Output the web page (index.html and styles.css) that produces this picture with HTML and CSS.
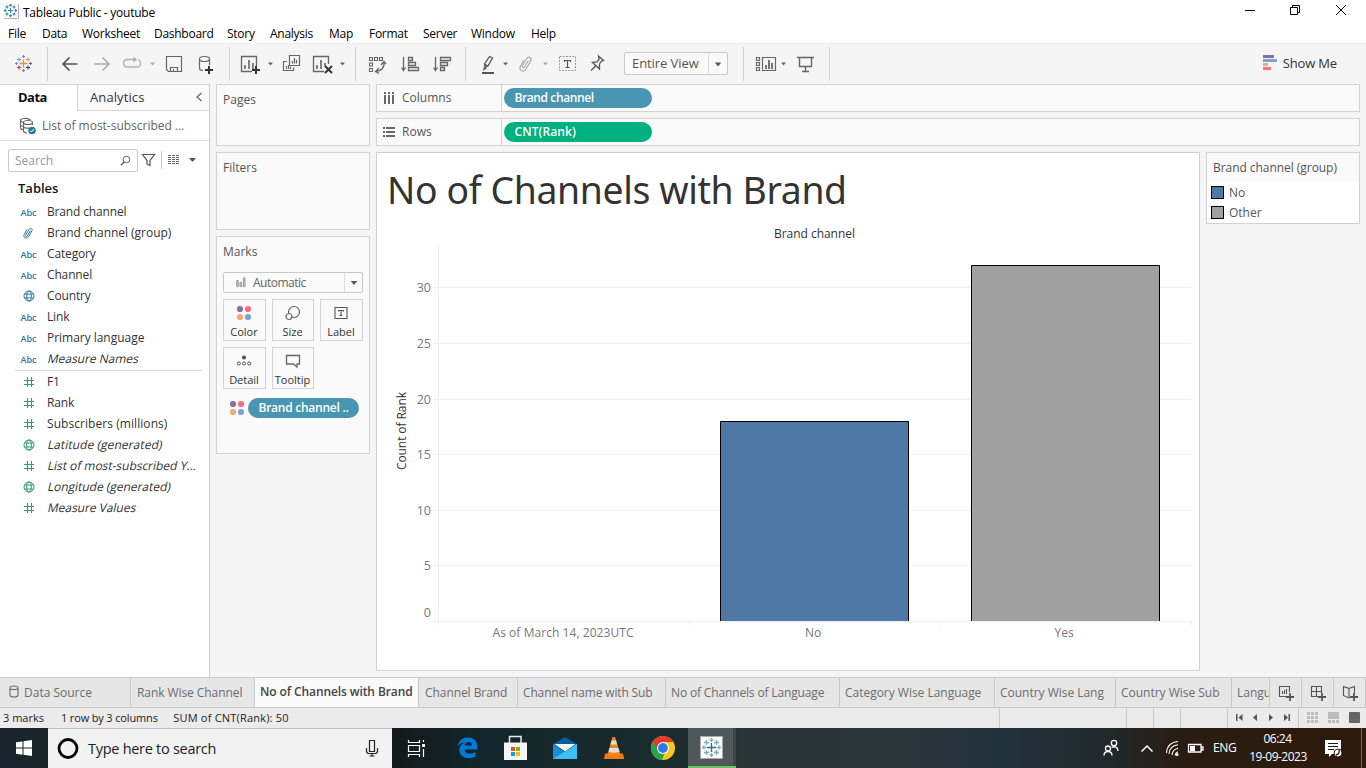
FILE: index.html
```html
<!DOCTYPE html>
<html lang="en">
<head>
<meta charset="utf-8">
<title>Tableau Public - youtube</title>
<link rel="stylesheet" href="styles.css">
</head>
<body>
<svg class="defs" width="0" height="0">
  <defs>
    <path id="plus-s" d="M-2.5 0H2.5M0-2.5V2.5"/>
    <path id="plus-l" d="M-4 0H4M0-4V4"/>
    <path id="caret" d="M-2.5-1.5H2.5L0 1.5Z"/>
    <symbol id="abc" viewBox="0 0 18 12"><text x="0.5" y="10" textLength="16" lengthAdjust="spacingAndGlyphs">Abc</text></symbol>
    <symbol id="globe" viewBox="0 0 12 12"><g fill="none" stroke="currentColor"><circle cx="6" cy="6" r="5"/><ellipse cx="6" cy="6" rx="2.3" ry="5"/><path d="M1.5 4H10.5M1.5 8H10.5"/></g></symbol>
    <symbol id="hash" viewBox="0 0 12 12"><path d="M4.5 1V11M8.5 1V11M1 4.5H11M1 8.5H11" fill="none" stroke="currentColor" stroke-width="1.1"/></symbol>
    <symbol id="clip" viewBox="0 0 12 14"><path d="M8.5 4.5L5.3 10C4.6 11.2 3 10.4 3.6 9.2L7 3.4C8.200 1.300 11 2.600 9.900 4.900L6.600 10.700C4.900 13.500 .5 11.800 2.200 8.300L5 3.500" fill="none" stroke="currentColor" stroke-width="1"/></symbol>
    <symbol id="dots" viewBox="0 0 16 16"><circle cx="4" cy="4" r="3.1" fill="#8a6f9e"/><circle cx="12" cy="4" r="3.1" fill="#fa6e7d"/><circle cx="4" cy="12" r="3.1" fill="#f4a77c"/><circle cx="12" cy="12" r="3.1" fill="#7ea3cf"/></symbol>
  </defs>
</svg>

<header class="titlebar">
  <svg class="app-icon" viewBox="0 0 17 17"><path d="M0 0H15V15H0Z" fill="#f6f6f6"/><path d="M15.500 1V15.500H1" fill="none" stroke="#b5b5b5"/><g stroke="#3c87b4" stroke-width="1.200"><use href="#plus-s" x="7.500" y="7.500"/><path d="M7.500 1V3.500M7.500 11.500V14M1 7.500H3.500M11.500 7.500H14M6 2.300H9M6 12.700H9M2.300 6V9M12.700 6V9M2.500 4H5.500M4 2.500V5.500M9.500 4H12.500M11 2.500V5.500M2.500 11H5.500M4 9.500V12.500M9.500 11H12.500M11 9.500V12.500"/></g></svg>
  <span class="app-title">Tableau Public - youtube</span>
  <svg class="window-buttons" viewBox="1240 0 126 24"><path d="M1245 10.500H1255M1290.500 7.500H1297.500V14.500H1290.500ZM1292.500 7V5.500H1299.500V12.500H1297.500M1336 5L1346 15M1346 5L1336 15" fill="none" stroke="#000"/></svg>
</header>
<nav class="menubar">
  <span>File</span><span>Data</span><span>Worksheet</span><span>Dashboard</span><span>Story</span><span>Analysis</span><span>Map</span><span>Format</span><span>Server</span><span>Window</span><span>Help</span>
</nav>

<div class="toolbar">
  <svg class="tool" width="48" viewBox="0 44 48 40"><g stroke-width="1.100"><use href="#plus-l" x="23.500" y="63.500" stroke="#eb8a3c" stroke-width="1.300"/><path d="M23.500 55V58M22 56.500H25M23.500 69V72M22 70.500H25" stroke="#7d86a8"/><path d="M15 63.500H18M16.500 62V65" stroke="#5b9db5"/><path d="M29 63.500H32M30.500 62V65" stroke="#5a6591"/><path d="M17 59.500H21M19 57.500V61.500" stroke="#6da2b8"/><path d="M26 59.500H30M28 57.500V61.500" stroke="#e7915b"/><path d="M17 67.500H21M19 65.500V69.500" stroke="#c8304a"/><path d="M26 67.500H30M28 65.500V69.500" stroke="#1f457e"/></g></svg>
  <svg class="tool sep" width="182" viewBox="48 44 182 40">
    <path d="M77.500 64H63M69.500 57.500L63 64L69.500 70.500" stroke="#555" stroke-width="1.700" fill="none"/>
    <path d="M94.500 64H109M102.500 57.500L109 64L102.500 70.500" stroke="#aaa" stroke-width="1.500" fill="none"/>
    <path d="M134 59.500H128Q123.500 59.500 123.500 63.200T128 67H137Q140.500 67 140.500 63.500Q140.500 60.500 138.500 59.500" stroke="#b0b0b0" stroke-width="1.300" fill="none"/><path d="M133.500 56.500V62.500L137 59.500Z" fill="#b0b0b0"/>
    <use href="#caret" x="152.500" y="64" fill="#aaa"/>
    <path d="M166.500 56.500H181.500V71.500H168.500L166.500 69.500ZM170.500 71V67.500H177.500V71M173.500 69V71" stroke="#666" stroke-width="1.200" fill="none"/>
    <path d="M199.500 59Q199.500 56.500 204.500 56.500T209.500 59T204.500 61.500T199.500 59V68.500Q200 70.500 203 70.500M209.500 59V65" stroke="#666" stroke-width="1.200" fill="none"/><use href="#plus-l" x="209" y="70" stroke="#333" stroke-width="2"/>
  </svg>
  <svg class="tool sep" width="126" viewBox="230 44 126 40">
    <g stroke="#666" fill="none"><path d="M252 71.500H241.500V56.500H256.500V66" stroke-width="1.300"/><path d="M245 69V65M249 69V60M253 69V63" stroke-width="1.600"/></g><use href="#plus-l" x="256" y="70" stroke="#333" stroke-width="2"/><use href="#caret" x="270.500" y="64" fill="#666"/>
    <g stroke="#666" fill="none"><path d="M289.500 55.500H299.500V65.500H289.500ZM287 61.500H283.500V70.500H293.500V67.500" stroke-width="1.200"/><path d="M292.500 63.500V61M294.500 63.500V58M296.500 63.500V60M286.500 69V66M288.500 69V65M290.500 69V66.500" stroke-width="1.200"/></g>
    <g stroke="#666" fill="none"><path d="M324 71.500H313.500V56.500H328.500V64" stroke-width="1.300"/><path d="M317 69V65M321 69V60M325 66V63" stroke-width="1.600"/></g><path d="M325 66L332 73M332 66L325 73" stroke="#333" stroke-width="2"/><use href="#caret" x="342.500" y="64" fill="#666"/>
  </svg>
  <svg class="tool sep" width="110" viewBox="356 44 110 40">
    <g stroke="#666" fill="none" stroke-width="1.100"><path d="M369.500 57.500H372.500V60.500H369.500ZM374.500 57.500H377.500V60.500H374.500ZM379.500 57.500H382.500V60.500H379.500ZM369.500 63H372.500V66H369.500ZM369.500 68.500H372.500V71.500H369.500Z"/><path d="M384 62Q385 70 376 71.500M381 65L384 61.500L386 64M379 68L375.500 71.500L379 73.500" stroke-width="1.300"/>
    <path d="M403.500 57V70M401.500 67.500L403.500 70.500L405.500 67.500M408.500 57.500H412.500V60.500H408.500ZM408.500 62.500H415.500V65.500H408.500ZM408.500 67.500H418.500V70.500H408.500Z" stroke-width="1.300"/>
    <path d="M435.500 57V70M433.500 67.500L435.500 70.500L437.500 67.500M440.500 57.500H450.500V60.500H440.500ZM440.500 62.500H447.500V65.500H440.500ZM440.500 67.500H444.500V70.500H440.500Z" stroke-width="1.300"/></g>
  </svg>
  <svg class="tool" width="158" viewBox="466 44 158 40">
    <path d="M485 67L484.500 64L489.500 56.500L492.500 58L488 66ZM484.500 64L488 66M484.500 67.500L484 69.500L486.500 67.500" stroke="#555" fill="none" stroke-width="1.300"/><path d="M482 73H494" stroke="#555" stroke-width="2"/><use href="#caret" x="505.500" y="64" fill="#666"/>
    <path d="M528.500 60.500L524.500 67C523.500 68.500 521.500 67.500 522.500 65.500L526.500 59C528.500 55.500 532.500 57.500 530.500 61.500L526 69C523.500 73 518 70.500 520.500 66L524 60" stroke="#aaa" fill="none" stroke-width="1.200"/><use href="#caret" x="545.500" y="64" fill="#aaa"/>
    <path d="M559.500 56.500H575.500V70.500H559.500Z" stroke="#999" stroke-dasharray="2 1.200" fill="none"/><path d="M564.500 62V60.500H570.500V62M567.500 60.500V67.500M565.500 67.500H569.500" stroke="#555" stroke-width="1.200" fill="none"/>
    <path d="M598.500 56L603.500 60.500L601.500 61L599.500 64L599.500 69L592.500 62.500L597 62L599 59.500ZM595.500 66L591 70.500" stroke="#555" stroke-width="1.300" fill="none"/>
  </svg>
  <div class="fit-select"><span>Entire View</span><svg width="18" height="20"><use href="#caret" transform="translate(9 10.500) scale(1.300)" fill="#555"/></svg></div>
  <svg class="tool sep" width="102" viewBox="728 44 102 40"><path d="M743.500 47V81" stroke="#d2d2d2"/><g stroke="#666" fill="none" stroke-width="1.200"><path d="M756.500 57.500H759.500V60.500H756.500ZM756.500 62.500H759.500V65.500H756.500ZM756.500 67.500H759.500V70.500H756.500ZM762.500 57.500H775.500V70.500H762.500Z"/><path d="M766 69V65M769 69V60M772 69V63" stroke-width="1.800"/><path d="M797 57.500H814M799.500 57.500V66.500H811.500V57.500M805.500 66.500V71M802 71.500H809" stroke-width="1.400"/></g><use href="#caret" x="783.500" y="64" fill="#666"/></svg>
  <div class="show-me"><svg width="14" height="16"><path fill="#86719b" d="M0 0H11V3H0Z"/><path fill="#7ea3cf" d="M0 4H14V7H0Z"/><path fill="#f4a77c" d="M0 8H5V11H0Z"/><path fill="#fa6e7d" d="M0 12H8V15H0Z"/></svg><span>Show Me</span></div>
</div>

<main class="workspace">
  <aside class="data-pane">
    <div class="pane-tabs"><b>Data</b><div><span>Analytics</span><svg width="8" height="12"><path d="M6.500 1L2 5L6.500 9" fill="none" stroke="#666" stroke-width="1.300"/></svg></div></div>
    <div class="source-row"><svg width="18" height="18" viewBox="19 116 18 18"><g fill="none" stroke="#666" stroke-width="1.100"><path d="M30.500 119Q28 116.800 24 117.500T20.500 119.500V127Q21 128.500 23 128.500M20.500 119.500Q21.500 121.500 24 121.500M20.500 124Q21.500 125.500 23.500 125.500"/><ellipse cx="28" cy="121.500" rx="4.500" ry="2"/><path d="M23.500 121.500V130Q24 132 27 132M32.500 121.500V124M23.500 126Q25 127.500 29 127"/></g><circle cx="32" cy="129.500" r="3.800" fill="#2b7a9e"/><path d="M30 129.500L31.500 131L34 128" fill="none" stroke="#fff"/></svg><span>List of most-subscribed ...</span></div>
    <div class="search-row">
      <div class="search-box"><span>Search</span><svg width="11" height="12"><circle cx="6.500" cy="4.500" r="3.300" fill="none" stroke="#666"/><path d="M4.200 7L1 10.200" stroke="#555" stroke-width="1.300"/></svg></div>
      <svg class="search-tools" width="66" height="24" viewBox="138 148 66 24"><path d="M142.500 154.500H154.500L150 160.500V165.500L147 164V160.500Z" fill="none" stroke="#555" stroke-width="1.200"/><path d="M161.500 151V169" stroke="#d0d0d0"/><path d="M168 155.500H180M168 157.500H180M168 159.500H180M168 161.500H180M168 163.500H180" stroke="#666" stroke-dasharray="3 1 3 1 3 1"/><path d="M189 158H196L192.500 162Z" fill="#555"/></svg>
    </div>
    <h2>Tables</h2>
    <ul class="fields dims">
      <li><svg class="abc"><use href="#abc"/></svg>Brand channel</li>
      <li class="wide"><svg class="clip"><use href="#clip"/></svg>Brand channel (group)</li>
      <li><svg class="abc"><use href="#abc"/></svg>Category</li>
      <li><svg class="abc"><use href="#abc"/></svg>Channel</li>
      <li><svg class="glyph"><use href="#globe"/></svg>Country</li>
      <li><svg class="abc"><use href="#abc"/></svg>Link</li>
      <li class="wide"><svg class="abc"><use href="#abc"/></svg>Primary language</li>
      <li class="wide"><svg class="abc"><use href="#abc"/></svg><i>Measure Names</i></li>
    </ul>
    <ul class="fields measures">
      <li><svg class="glyph"><use href="#hash"/></svg>F1</li>
      <li><svg class="glyph"><use href="#hash"/></svg>Rank</li>
      <li class="wider"><svg class="glyph"><use href="#hash"/></svg>Subscribers (millions)</li>
      <li class="wider"><svg class="glyph"><use href="#globe"/></svg><i>Latitude (generated)</i></li>
      <li class="wide"><svg class="glyph"><use href="#hash"/></svg><i>List of most-subscribed Y...</i></li>
      <li class="wide"><svg class="glyph"><use href="#globe"/></svg><i>Longitude (generated)</i></li>
      <li class="wide"><svg class="glyph"><use href="#hash"/></svg><i>Measure Values</i></li>
    </ul>
  </aside>

  <section class="cards">
    <div class="card pages"><h3>Pages</h3></div>
    <div class="card filters"><h3>Filters</h3></div>
    <div class="card marks">
      <h3>Marks</h3>
      <div class="mark-type"><svg width="10" height="11"><path d="M.7 3.500H2.300V9.500H.7ZM4 5.500H5.600V9.500H4ZM7.400 1H9V9.500H7.400Z" fill="#ccc" stroke="#999"/></svg><span>Automatic</span><svg class="drop" width="18" height="19"><use href="#caret" transform="translate(9 10) scale(1.300)" fill="#555"/></svg></div>
      <div class="mark-grid">
        <div><svg width="16" height="16"><use href="#dots"/></svg>Color</div>
        <div><svg width="16" height="16"><g fill="#fafafa" stroke="#666" stroke-width="1.200"><circle cx="9" cy="7" r="5.500"/><circle cx="4" cy="11.500" r="3"/></g></svg>Size</div>
        <div><svg width="16" height="16"><path d="M2 2.500H14V13.500H2ZM5.500 6.500V5.500H10.500V6.500M8 5.500V10.500M6.500 10.500H9.500" fill="none" stroke="#555" stroke-width="1.100"/></svg>Label</div>
        <div><svg width="16" height="16"><circle cx="8" cy="4.500" r="2.100" fill="#555"/><g fill="none" stroke="#555"><circle cx="2.800" cy="10.500" r="1.600"/><circle cx="8" cy="10.500" r="1.600"/><circle cx="13.200" cy="10.500" r="1.600"/></g></svg>Detail</div>
        <div><svg width="16" height="16"><path d="M1.500 2.500H14.500V11H12V14L8.500 11H1.500Z" fill="none" stroke="#666" stroke-width="1.300"/></svg>Tooltip</div>
      </div>
      <div class="mark-pill"><svg width="16" height="16"><use href="#dots"/></svg><span class="pill blue">Brand channel ..</span></div>
    </div>
  </section>

  <section class="stage">
    <div class="shelf"><div class="shelf-name"><svg width="13" height="13"><path d="M1 0H3V2H1ZM5 0H7V2H5ZM9 0H11V2H9ZM1 3H3V12H1ZM5 3H7V12H5ZM9 3H11V12H9Z" fill="#666"/></svg><span>Columns</span></div><span class="pill blue">Brand channel</span></div>
    <div class="shelf"><div class="shelf-name"><svg width="13" height="13"><path d="M0 1H2V3H0ZM0 5H2V7H0ZM0 9H2V11H0ZM3 1H12V3H3ZM3 5H12V7H3ZM3 9H12V11H3Z" fill="#666"/></svg><span>Rows</span></div><span class="pill green">CNT(Rank)</span></div>
    <div class="stage-row">
      <div class="view">
        <h1>No of Channels with Brand</h1>
        <svg class="chart" viewBox="377 224 822 446">
          <path class="grid" d="M438 287.500H1191M438 343.500H1191M438 399.500H1191M438 454.500H1191M438 510.500H1191M438 565.500H1191"/>
          <path class="axis" d="M438.500 245V625M434 621.500H1191.500V625M689.500 621V625M940.500 621V625M434 287.500H438M434 343.500H438M434 399.500H438M434 454.500H438M434 510.500H438M434 565.500H438"/>
          <path d="M720.500 621V421.500H908.500V621" fill="#4e79a7" stroke="#000"/>
          <path d="M971.500 621V265.500H1159.500V621" fill="#a0a0a0" stroke="#000"/>
          <text class="head" x="774" y="238" textLength="81">Brand channel</text>
          <g class="nums"><text x="431" y="292">30</text><text x="431" y="348">25</text><text x="431" y="404">20</text><text x="431" y="459">15</text><text x="431" y="515">10</text><text x="431" y="570">5</text><text x="431" y="617">0</text></g>
          <g class="cats"><text x="492.500" y="637" textLength="141">As of March 14, 2023UTC</text><text x="805" y="637">No</text><text x="1054.500" y="637">Yes</text></g>
          <text class="head" transform="translate(406 470) rotate(-90)" textLength="78">Count of Rank</text>
        </svg>
      </div>
      <div class="legend"><h3>Brand channel (group)</h3><p><i class="no"></i>No</p><p><i class="other"></i>Other</p></div>
    </div>
  </section>
</main>

<div class="sheet-tabs">
  <span><svg width="10" height="14"><path d="M1 3Q1 1 5 1T9 3V10Q9 12 5 12T1 10ZM1 3Q1 4.500 5 4.500T9 3" fill="none" stroke="#666" stroke-width="1.100"/></svg>Data Source</span><span>Rank Wise Channel</span><span class="active">No of Channels with Brand</span><span>Channel Brand</span><span class="tight">Channel name with Sub</span><span class="tight">No of Channels of Language</span><span class="shift">Category Wise Language</span><span class="shift">Country Wise Lang</span><span class="shift">Country Wise Sub</span><span class="shift">Langu</span>
  <span class="new"><svg viewBox="1270 678 31 29"><path d="M1288 696.500H1279.500V686.500H1289.500V692M1282.500 694V691M1284.500 694V690M1286.500 694V689" fill="none" stroke="#555" stroke-width="1.100"/><path d="M1286 697H1294M1290 693V701" stroke="#555" stroke-width="1.800"/></svg></span>
  <span class="new"><svg viewBox="1302 678 31 29"><path d="M1318 696.500H1311.500V686.500H1321.500V693M1311.500 691.500H1321.500M1316.500 686.500V696.500" fill="none" stroke="#555" stroke-width="1.100"/><path d="M1318 697H1326M1322 693V701" stroke="#555" stroke-width="1.800"/></svg></span>
  <span class="new"><svg viewBox="1334 678 31 29"><path d="M1343.500 686.500L1349 688.500V698L1343.500 695.500ZM1349 688.500L1354.500 686.500V693" fill="none" stroke="#555" stroke-width="1.100"/><path d="M1350 697H1358M1354 693V701" stroke="#555" stroke-width="1.800"/></svg></span>
</div>
<footer class="status">
  <span>3 marks</span><span>1 row by 3 columns</span><span>SUM of CNT(Rank): 50</span>
  <svg width="367" height="20" viewBox="999 708 367 20"><path d="M999.500 708V728M1126.500 708V728M1153.500 708V728M1180.500 708V728M1227.500 708V728M1298.500 708V728" stroke="#c9c9c9"/><path d="M1236 714H1237.500V721H1236ZM1242.500 714V721L1238.500 717.500ZM1257 714V721L1253 717.500ZM1269 714V721L1273 717.500ZM1284 714V721L1288 717.500ZM1288.500 714H1290V721H1288.500Z" fill="#555"/><path d="M1307 712H1310V715H1307ZM1311 712H1314V715H1311ZM1315 712H1318V715H1315ZM1307 716H1310V719H1307ZM1311 716H1314V719H1311ZM1315 716H1318V719H1315ZM1307 720H1310V723H1307ZM1311 720H1314V723H1311ZM1315 720H1318V723H1315ZM1328 712H1339V719H1328ZM1328 720H1331V723H1328ZM1332 720H1335V723H1332ZM1336 720H1339V723H1336Z" fill="#bdbdbd"/><rect x="1349" y="712" width="11" height="11" rx="1" fill="#666"/></svg>
</footer>

<div class="taskbar">
  <svg class="start" viewBox="0 728 48 40"><path d="M16 742.300L22.500 741.400V747.500H16ZM23.500 741.200L32 740V747.500H23.500ZM16 748.500H22.500V754.700L16 753.800ZM23.500 748.500H32V756L23.500 754.800Z" fill="#fff"/></svg>
  <div class="task-search"><svg width="24" height="24"><circle cx="12" cy="11.500" r="9" fill="none" stroke="#000" stroke-width="2.800"/></svg><span>Type here to search</span><svg class="mic" width="14" height="20"><path d="M4.500 1.500H9.500V12.500H4.500ZM1.500 9V12Q1.500 14.500 4 14.500H10Q12.500 14.500 12.500 12V9M7 14.500V17M4.500 17H9.500" fill="none" stroke="#222" stroke-width="1.200"/></svg></div>
  <svg class="apps" viewBox="392 728 344 40">
    <path d="M408.500 740V742.500H419.500V740M408.500 745.500H419.500V751.500H408.500ZM408.500 757V754.500H419.500V757M423.500 740V742M423.500 749V757" fill="none" stroke="#fff" stroke-width="1.200"/><path d="M422 744H425V747H422Z" fill="#fff"/>
    <path d="M457.500 746C459 740 463 737.500 468 737.500C474.500 737.500 477.500 742 477.300 747V749.500H464.500C464.800 753.500 469.500 755 475.500 752.300V756.500C468.500 760 460 758 459.300 750.500C459 747 461.500 744 465 742.500C461.500 742.800 459 744 457.500 746ZM464.800 745.500H472C472 743.500 471 742 468.700 742C466.500 742 465.200 743.500 464.800 745.500Z" fill="#0078d7"/>
    <path d="M509.500 745V736.500H521V745" fill="none" stroke="#e8e8e8" stroke-width="1.500"/><path d="M504 742.500H527V760H504Z" fill="#f5f5f5"/><path d="M511 747H515V751H511Z" fill="#e74e23"/><path d="M516 747H520V751H516Z" fill="#7fba00"/><path d="M511 752H515V756H511Z" fill="#00a4ef"/><path d="M516 752H520V756H516Z" fill="#ffb900"/>
    <path d="M553 744L565 737L577 744V748H553Z" fill="#0c5aa0"/><path d="M554.500 744H575.500L565 751.500Z" fill="#f5f5f5"/><path d="M553 744L565 752L577 744V759H553Z" fill="#1a8dd8"/><path d="M553 759L577 744V759Z" fill="#3ac1f2"/>
    <path d="M605 753.500H623L624.200 759H604Z" fill="#ef7a12"/><path d="M612.500 737H615L620.500 754.500Q614 758 607.500 754.500Z" fill="#f28318"/><path d="M611.600 740.500H616L617.200 744.500H610.300ZM609.500 748H618.400L619.500 751.500Q614 754 608.500 751.500Z" fill="#ddd"/>
    <circle cx="663" cy="748" r="12" fill="#f9c718"/><path d="M652.600 742A12 12 0 0 1 673.400 742H663L658 751Z" fill="#dc3b2d"/><path d="M652.600 742L658.500 750.500L665 752.500L662 760A12 12 0 0 1 652.600 742Z" fill="#2ca24c"/><circle cx="663" cy="748" r="6" fill="#fff"/><circle cx="663" cy="748" r="4.900" fill="#2d78e8"/>
    <path d="M688 728H733V766H688Z" fill="#4d585a"/><path d="M733 728H736V766H733Z" fill="#3c4648"/><path d="M688 766H736V768H688Z" fill="#68c35a"/><path d="M700.500 736.500H722.500V758.500H700.500Z" fill="#fafafa" stroke="#aaa"/>
    <path d="M711.500 743V752M707 747.500H716" stroke="#28728e" stroke-width="1.300"/><path d="M711.500 738V742M709.500 740H713.500M711.500 753V757M709.500 755H713.500M702 747.500H706M704 745.500V749.500M717 747.500H721M719 745.500V749.500M704 742.500H709M706.500 740V745M714 742.500H719M716.500 740V745M704 752.500H709M706.500 750V755M714 752.500H719M716.500 750V755" stroke="#80acc2" stroke-width="1.300"/>
  </svg>
  <svg class="tray" viewBox="1100 728 110 40"><g fill="none" stroke="#fff" stroke-width="1.300"><circle cx="1108" cy="748.500" r="2.500"/><path d="M1104 755.500Q1104 751.500 1108 751.500T1112 755.500"/><circle cx="1114" cy="743" r="2.700"/><path d="M1111.500 747.500Q1117.500 745 1118 751"/><path d="M1141.500 751.500L1147 746L1152.500 751.500" stroke-width="1.500"/><path d="M1166.500 753Q1167 742.500 1178 741.500M1169 754Q1169.500 746 1178 744.800M1172 755Q1172.500 749.500 1178 748.300M1175 755.500Q1175.500 752.500 1178 751.700" stroke-width="1.100"/><path d="M1188.500 744.500H1201V752H1188.500ZM1201.500 747H1203V750H1201.500"/></g><circle cx="1177" cy="754.500" r="1.500" fill="#fff"/><path d="M1190 746H1195V751H1190Z" fill="#fff"/></svg>
  <span class="lang">ENG</span>
  <div class="clock"><span>06:24</span><span>19-09-2023</span></div>
  <svg class="note" viewBox="1318 728 48 40"><path d="M1325 740H1341V754H1332L1329 757V754H1325Z" fill="#fff"/><path d="M1328 743.500H1338M1328 746.500H1338M1328 749.500H1334" stroke="#2c1a0d" stroke-width="1.200"/><circle cx="1338" cy="753" r="4" fill="#fff" stroke="#2c1a0d"/><path d="M1336 755Q1340 754 1339 750" fill="none" stroke="#2c1a0d" stroke-width="1.300"/><path d="M1361.500 728V768" stroke="#77695f"/></svg>
</div>
</body>
</html>
```
FILE: styles.css
```css
* { box-sizing: border-box; }
body { margin: 0; width: 1366px; height: 768px; overflow: hidden; background: #f5f5f5; font: 12px "Open Sans", "Noto Sans", sans-serif; color: #333; display: flex; flex-direction: column; white-space: nowrap; }
svg { display: block; flex: none; }
.defs { position: absolute; }
h1, h2, h3, p, ul { margin: 0; padding: 0; font-weight: 400; }
ul { list-style: none; }

.titlebar { height: 24px; background: #fff; display: flex; align-items: center; color: #000; padding-bottom: 1px; }
.app-icon { width: 17px; height: 17px; margin-left: 3px; }
.app-title { margin-left: 3px; padding-top: 1px; letter-spacing: -0.24px; }
.window-buttons { width: 126px; height: 24px; margin: 1px 0 0 auto; }
.menubar { height: 19px; background: #fff; color: #000; display: grid; grid-template-columns: 34px 40px 72px 73px 43px 59px 40px 54px 48px 60px 40px; padding-left: 8px; line-height: 19px; letter-spacing: -0.27px; }

.toolbar { height: 41px; border-top: 1px solid #ececec; display: flex; align-items: center; color: #333; font-size: 13px; }
.tool { height: 40px; }
.sep, .tool:first-child { background: linear-gradient(#d2d2d2, #d2d2d2) right 0 top 3px / 1px 34px no-repeat; }
.fit-select { width: 104px; height: 23px; margin-top: -1px; border: 1px solid #c9c9c9; border-radius: 2px; background: #fafafa; display: flex; align-items: center; color: #555; letter-spacing: -0.08px; }
.fit-select span { width: 84px; padding-left: 7px; border-right: 1px solid #ddd; line-height: 21px; }
.show-me { display: flex; align-items: center; gap: 6px; margin-left: auto; padding-right: 29px; margin-top: -2px; letter-spacing: -0.15px; }

.workspace { height: 593px; display: flex; }
.data-pane { width: 210px; border-right: 1px solid #cdcdcd; border-top: 1px solid #d4d4d4; background: #fff; }
.pane-tabs { display: flex; height: 26px; line-height: 25px; font-size: 13px; color: #333; }
.pane-tabs b { width: 77px; padding-left: 18px; font-weight: 700; letter-spacing: -0.5px; color: #111; }
.pane-tabs div { flex: 1; display: flex; align-items: center; justify-content: space-between; padding: 0 6px 0 12px; border-left: 1px solid #d4d4d4; border-bottom: 1px solid #d4d4d4; background: #fafafa; letter-spacing: 0.1px; }
.source-row { height: 30px; display: flex; align-items: center; gap: 5px; padding-left: 19px; border-bottom: 1px solid #ddd; color: #666; }
.source-row span { letter-spacing: -0.02px; }
.search-row { display: flex; padding: 8px 0 0 8px; height: 31px; }
.search-box { width: 130px; height: 23px; border: 1px solid #c9c9c9; border-radius: 2px; display: flex; align-items: center; justify-content: space-between; padding: 0 6px; color: #999; }
.search-tools { margin-top: -1px; }
h2 { font-size: 13px; font-weight: 600; line-height: 18px; padding: 7px 0 0 18px; color: #111; height: 29px; }
.fields li { height: 21px; display: grid; grid-template-columns: 28px auto; align-items: center; justify-content: start; margin-left: 19px; letter-spacing: -0.15px; }
.fields .wide { letter-spacing: -0.03px; }
.fields .wider { letter-spacing: 0.06px; }
.fields i { font-style: normal; transform: skewX(-12deg); transform-origin: 0 50%; padding-left: 1px; }
.fields svg { justify-self: start; }
.dims svg { color: #33799b; fill: #33799b; }
.measures svg { color: #2f9c74; }
.measures { border-top: 1px solid #d9d9d9; margin: 1px 7px 0 15px; }
.measures li { margin-left: 4px; }
.abc { width: 18px; height: 12px; margin-left: 1px; font: 600 9px "Open Sans", sans-serif; }
.glyph { width: 12px; height: 12px; margin-left: 3.5px; }
.clip { width: 12px; height: 14px; margin-left: 3px; }
.dims .glyph, .dims .clip { fill: none; }

.cards { width: 154px; margin-left: 6px; display: flex; flex-direction: column; gap: 6px; }
.card { border: 1px solid #d2d2d2; background: #fafafa; padding: 5px 6px; }
h3 { font-size: 12px; line-height: 19px; color: #555; }
.pages { height: 62px; }
.filters { height: 78px; }
.marks { height: 218px; }
.mark-type { display: flex; align-items: center; height: 21px; margin-top: 11px; border: 1px solid #c9c9c9; border-radius: 2px; padding-left: 12px; gap: 7px; color: #666; width: 140px; }
.mark-type span { letter-spacing: -0.5px; }
.mark-type .drop { margin-left: auto; border-left: 1px solid #ddd; }
.mark-grid { display: grid; grid-template-columns: 43px 42px 43px; grid-auto-rows: 42px; gap: 6px; margin-top: 6px; width: 140px; font-size: 11px; color: #333; }
.mark-grid div { border: 1px solid #d2d2d2; display: flex; flex-direction: column; align-items: center; padding: 5px 1px 0 0; line-height: 15px; gap: 3px; }
.mark-pill { display: flex; align-items: center; margin-top: 9px; padding-left: 6px; gap: 3px; }
.pill { height: 20px; border-radius: 10px; color: #fff; line-height: 19px; padding-left: 10.5px; width: 148px; font-weight: 600; letter-spacing: -0.4px; }
.mark-pill .pill { width: 111px; letter-spacing: -0.25px; }
.blue { background: #4996b2; }
.green { background: #00b180; letter-spacing: 0.1px; }

.stage { margin-left: 6px; width: 984px; display: flex; flex-direction: column; gap: 6px; }
.shelf { height: 28px; border: 1px solid #d2d2d2; background: #fafafa; display: flex; align-items: center; gap: 2px; }
.shelf-name { width: 125px; height: 26px; border-right: 1px solid #d2d2d2; display: flex; align-items: center; gap: 6px; padding-left: 6px; color: #555; }
.shelf-name span { padding-bottom: 1px; }
.stage-row { display: flex; gap: 6px; align-items: flex-start; }
.view { width: 824px; height: 519px; background: #fff; border: 1px solid #d2d2d2; }
h1 { height: 71px; font: 37.330px/74px "Noto Sans", sans-serif; letter-spacing: -0.37px; padding-left: 10px; color: #333; }
.chart { width: 822px; height: 446px; }
.grid { stroke: #f2f2f2; }
.axis { stroke: #efefef; fill: none; }
.head { fill: #333; }
.nums { fill: #777; text-anchor: end; font-size: 12.500px; }
.cats { fill: #777; }
.legend { width: 154px; height: 72px; border: 1px solid #d2d2d2; background: #fff; }
.legend h3 { height: 29px; line-height: 30px; padding-left: 6px; background: #fafafa; letter-spacing: -0.05px; }
.legend p { display: flex; align-items: center; gap: 5px; height: 20px; padding-left: 4px; color: #555; }
.legend i { width: 13px; height: 13px; border: 1px solid #000; }
.no { background: #4e79a7; }
.other { background: #a0a0a0; }

.sheet-tabs { height: 31px; display: grid; grid-template-columns: 131px 124px 164px 99px 148px 174px 155px 121px 116px 38px 32px 32px 32px; border-top: 1px solid #c9c9c9; border-bottom: 1px solid #c9c9c9; background: #e6e6e6; color: #6c6c6c; line-height: 29px; }
.sheet-tabs span { border-right: 1px solid #c9c9c9; padding-left: 6px; overflow: hidden; letter-spacing: -0.07px; display: flex; align-items: center; }
.sheet-tabs span:first-child { padding-left: 9px; gap: 5px; letter-spacing: 0; }
.sheet-tabs span:first-child svg { margin-top: -1px; }
.sheet-tabs .tight { padding-left: 5px; letter-spacing: -0.15px; }
.sheet-tabs .shift { padding-left: 5px; letter-spacing: -0.02px; }
.sheet-tabs .active { background: #fafafa; color: #444; font-weight: 600; padding: 0 0 2px 5px; letter-spacing: -0.1px; }
.sheet-tabs .new { padding: 0; }
.new svg { width: 31px; height: 29px; }
.status { height: 20px; background: #ebebeb; display: flex; align-items: center; padding-left: 3px; gap: 17px; font-size: 11px; color: #222; }
.status span { padding-bottom: 1px; }
.status span:nth-child(2) { letter-spacing: -0.15px; }
.status span:nth-child(3) { margin-left: -1.5px; letter-spacing: 0.2px; }
.status svg { margin-left: auto; }

.taskbar { height: 40px; display: flex; align-items: center; color: #fff; background: linear-gradient(90deg, #18252c 0, #17252b 48px, #15191b 392px, #12262b 480px, #1d2d2f 690px, #2a3437 750px, #2b3639 900px, #22323c 1000px, #20292a 1110px, #281d12 1180px, #2e1a0c 1366px); }
.start { width: 48px; height: 40px; }
.task-search { width: 344px; height: 40px; background: #f2f2f2; border-top: 1px solid #bbb; display: flex; align-items: center; padding: 0 13px 0 8px; color: #222; font-size: 14.500px; }
.task-search span { margin-left: 8px; letter-spacing: -0.28px; }
.mic { margin-left: auto; }
.apps { width: 344px; height: 40px; }
.tray { width: 110px; height: 40px; margin-left: 364px; }
.lang { width: 32px; padding: 0 0 1px 3px; letter-spacing: -0.4px; }
.clock { width: 72px; display: flex; flex-direction: column; align-items: center; line-height: 18px; letter-spacing: -0.5px; font-size: 12px; }
.clock span:first-child { padding-right: 1px; }
.note { width: 48px; height: 40px; margin-left: auto; }
```
